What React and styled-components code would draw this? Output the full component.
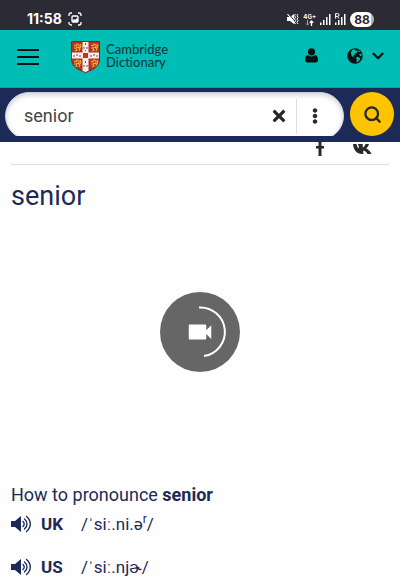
import React from 'react';
import styled, { createGlobalStyle } from 'styled-components';
import { FaTimes, FaEllipsisV } from 'react-icons/fa';
import { MdVideocam } from 'react-icons/md';
import { Search, ChevronDown } from 'lucide-react';

const navy = '#1d2a57';
const ink = '#292929';

const GlobalStyle = createGlobalStyle`
  * { box-sizing: border-box; }
  body { margin: 0; background: #fefefe; color: ${navy}; font-family: Roboto, "Liberation Sans", sans-serif; }
  h1, h2, p, ul { margin: 0; padding: 0; }
  svg { display: block; flex: none; }
`;

const IconButton = styled.button`
  display: flex;
  align-items: center;
  justify-content: ${(p) => (p.$spread ? 'space-between' : 'center')};
  flex: none;
  padding: 0;
  border: 0;
  background: none;
  color: ${(p) => p.$color || '#0b1110'};
  width: ${(p) => p.$width || 24}px;
  height: ${(p) => p.$height || 24}px;
`;

const StatusBar = styled.div`
  display: flex;
  align-items: center;
  height: 30px;
  padding: 8px 26px 0 27px;
  background: #2b2a35;
  color: #fff;
`;
const Clock = styled.span`
  font: 700 14px/20px Inter, sans-serif;
  margin-right: 6px;
`;
const StatusIcons = styled.div`
  display: flex;
  align-items: center;
  gap: 4px;
  margin-left: auto;
`;
const Network = styled.div`
  display: flex;
  flex-direction: column;
  align-items: center;
  font: 700 6px/7px Inter, sans-serif;
`;
const Battery = styled.span`
  width: 24px;
  border-radius: 8px;
  background: linear-gradient(90deg, #fff 88%, #b5b5ba 88%);
  color: #2b2a35;
  font: 700 12px/15px Inter, sans-serif;
  text-align: center;
`;

const Header = styled.header`
  display: flex;
  align-items: center;
  height: 58px;
  padding: 0 13px 4px 16px;
  background: #00bdb6;
  border-bottom: 1px solid #159d9d;
`;
const Brand = styled.a`
  display: flex;
  align-items: center;
  gap: 6px;
  margin-left: 31px;
  color: #103c3d;
  font: 500 13px/13px Lato, sans-serif;
  font-variant-ligatures: none;
  text-decoration: none;
`;
const BrandName = styled.span`
  display: flex;
  flex-direction: column;
  padding-bottom: 2px;
`;
const HeaderActions = styled.div`
  display: flex;
  align-items: center;
  margin-left: auto;
  padding-bottom: 2px;
  gap: 24px;
`;

const SearchBar = styled.form`
  display: flex;
  gap: 6px;
  height: 54px;
  padding: 4px 6px 6px 5px;
  background: ${navy};
`;
const FieldClip = styled.div`
  flex: 1;
  min-width: 0;
  overflow: hidden;
`;
const Field = styled.div`
  display: flex;
  align-items: center;
  height: 48px;
  padding: 0 16px 0 18px;
  border: 1px solid #c9cedc;
  border-radius: 24px;
  background: #fff;
  box-shadow: inset 0 2px 5px rgba(20, 25, 50, 0.2);
`;
const SearchInput = styled.input`
  flex: 1;
  min-width: 0;
  padding: 0;
  border: 0;
  outline: 0;
  background: none;
  color: #444;
  font: 400 18px/24px Roboto, sans-serif;
`;
const Divider = styled.span`
  width: 1px;
  height: 35px;
  margin: 0 6px 0 5px;
  background: #dedede;
`;
const SubmitButton = styled(IconButton)`
  border-radius: 50%;
  background: #ffc400;
`;

const Content = styled.main`
  padding: 0 11px;
`;
const ShareRow = styled.div`
  display: flex;
  align-items: flex-start;
  justify-content: flex-end;
  gap: 29px;
  height: 23px;
  padding-right: 17px;
  border-bottom: 1px solid #dedede;
`;
const ShareLink = styled.a`
  display: flex;
  color: ${ink};
`;
const Title = styled.h1`
  margin-top: 14px;
  font-size: 27px;
  line-height: 34px;
  font-weight: 400;
`;
const VideoArea = styled.div`
  display: flex;
  align-items: center;
  justify-content: center;
  height: 238px;
`;
const VideoButton = styled.button`
  display: grid;
  place-items: center;
  width: 80px;
  height: 80px;
  padding: 0;
  border: 0;
  border-radius: 50%;
  background: #666;
  color: #fff;
  > * { grid-area: 1 / 1; }
`;
const Subtitle = styled.h2`
  margin-top: 32px;
  font-size: 18px;
  line-height: 24px;
  font-weight: 400;
`;
const Pronunciations = styled.ul`
  display: flex;
  flex-direction: column;
  gap: 19px;
  margin-top: 5px;
  list-style: none;
`;
const Pronunciation = styled.li`
  display: flex;
  align-items: center;
  height: 24px;
  font-size: 17px;
  line-height: 24px;
`;
const Region = styled.strong`
  width: 40px;
  margin-left: 9px;
`;
const Sup = styled.sup`
  font-size: 12px;
  line-height: 0;
`;

const Screenshot = () => (
  <svg width="14" height="14" viewBox="0 0 14 14" fill="none" stroke="#fff" strokeWidth="1.3">
    <path d="M1 4V3a2 2 0 0 1 2-2h1M10 1h1a2 2 0 0 1 2 2v1M13 10v1a2 2 0 0 1-2 2h-1M4 13H3a2 2 0 0 1-2-2v-1" />
    <rect x="4" y="4" width="6" height="6" rx="1" />
    <path d="M4 9l2-2 1 1 2-2 1 1v3H4z" fill="#fff" stroke="none" />
  </svg>
);
const Muted = () => (
  <svg width="12" height="12" viewBox="0 0 12 12" fill="#fff">
    <path d="M0 4h3l4-3v10L3 8H0z" />
    <path d="M1.500.500l8 10" stroke="#2b2a35" />
    <path d="M.5 1l8 10" fill="none" stroke="#fff" strokeWidth="1.200" />
    <path d="M8.500 1l-1 1.700 1 1.600-1 1.700 1 1.700-1 1.600M11 1l-1 1.700 1 1.600-1 1.700 1 1.700-1 1.600 1 1.700" fill="none" stroke="#fff" />
  </svg>
);
const DataArrows = () => (
  <svg width="9" height="6" viewBox="0 0 9 6" fill="none" stroke="#fff">
    <path d="M2.5 0v5M1 3.500L2.500 5 4 3.500" stroke="#aaa" />
    <path d="M6.500 6V1M4.800 2.700L6.500 1l1.700 1.700" strokeWidth="1.300" />
  </svg>
);
const Signal = ({ roaming }) => (
  <svg width="11" height="12" viewBox="0 0 11 12" fill="#fff">
    {roaming ? (
      <path d="M.6 5.500V.6h2a1.400 1.400 0 0 1 0 2.800h-2M2.500 3.400l1.500 2.100" fill="none" stroke="#fff" />
    ) : null}
    <path d="M0 9.500h1.500V12H0zM3 7h1.500v5H3zM6 4h1.500v8H6zM9 1h1.500v11H9z" />
  </svg>
);
const Lion = ({ x, y }) => (
  <g transform={`translate(${x} ${y})`} fill="none" stroke="#e9b52f" strokeWidth="1.100">
    <path d="M1 2l2 1 1-2 2 1v2L3 5 1 5M3 5l1 2-2 1M5 4l2 2-1 2M7 1l1 2-1 2" />
  </g>
);
const Shield = () => (
  <svg width="29" height="32" viewBox="0 0 29 32">
    <defs>
      <clipPath id="shield"><path d="M.5.500h28V18c0 7-5.500 10.500-14 13.500C6 28.500.5 25 .5 18z" /></clipPath>
    </defs>
    <g clipPath="url(#shield)">
      <path d="M0 0h29v32H0z" fill="#b92f26" />
      <Lion x={2} y={2} /><Lion x={19} y={2} /><Lion x={2} y={18} /><Lion x={19} y={18} />
      <path d="M11.500 0h6v32h-6zM0 11.500h29v6H0z" fill="#f7eee8" />
      <path d="M12 12h5v5h-5z" fill="#c43228" />
      <path d="M14.500 2v2M13 6v2M16 6v2M14.500 9v1M14.500 20v2M13 24v2M16 24v2M3 14v2M6 13v2M9 14v2M20 14v2M23 13v2M26 14v2" stroke="#655" strokeWidth="1" />
    </g>
    <path d="M.5.500h28V18c0 7-5.500 10.500-14 13.500C6 28.500.5 25 .5 18z" fill="none" stroke="#5d342b" />
  </svg>
);
const Menu = () => (
  <svg width="22" height="16" viewBox="0 0 22 16" fill="currentColor">
    <path d="M0 0h22v2H0zM0 7h22v2H0zM0 14h22v2H0z" />
  </svg>
);
const User = () => (
  <svg width="13" height="15" viewBox="0 0 13 15" fill="currentColor">
    <circle cx="6.500" cy="3.800" r="3.600" />
    <path d="M3 7C1 7 0 9.500 0 12c0 1.500 1 2.500 2.500 2.500h8c1.500 0 2.500-1 2.500-2.500 0-2.500-1-5-3-5-1 1-2 1.400-3.500 1.400S4 8 3 7z" />
  </svg>
);
const Globe = () => (
  <svg width="16" height="16" viewBox="0 0 16 16">
    <circle cx="8" cy="8" r="7.700" fill="currentColor" />
    <path d="M5 2l2-.8 1.500.6L8 3l1.500-.5 1 .8L9.500 5 8 5.800 7.500 7.200 6 7.500 6.800 9 5.500 8.800 4.300 7 4 4.500zM11 2l2.200 1.800L11.500 4zM9 9.500l1.500-.7 2.700 1.400-.4 1.600-2.600 2.700-.8-.4.500-2zM12 6l2.300-.3.200 2-1.300.2z" fill="#00bdb6" />
  </svg>
);
const Speaker = () => (
  <svg width="21" height="18" viewBox="0 0 21 18" fill="none" stroke="currentColor" strokeWidth="1.400" strokeLinecap="round">
    <path d="M0 6h4l6-5v16l-6-5H0z" fill="currentColor" stroke="none" />
    <path d="M12 6.500c1.600 1.500 1.600 3.500 0 5M13.500 4c3.300 2.700 3.300 7.300 0 10M15.500 1.500c5 4 5 11 0 15" />
  </svg>
);
const Facebook = () => (
  <svg width="8" height="14" viewBox="0 0 8 14" fill="currentColor">
    <path d="M2.500 0h3v4H8v2.500H5.500V14h-3V6.500H0V4h2.500z" />
  </svg>
);
const Vk = () => (
  <svg width="19" height="13" viewBox="0 0 19 13" fill="currentColor">
    <path d="M0 2h3.500c.4 2 1.200 3.800 2.300 4.500V4L4.800 2h4.900v3.500c1.400-.5 2.300-2 2.900-3.500H16c-.4 1.800-1.500 3.300-2.800 4.200 2 .9 4 3 5.300 5.800h-4c-.8-1.500-2.200-3-4.200-3.400V12H9C4 12 .3 8 0 2z" />
  </svg>
);
const Progress = () => (
  <svg width="80" height="80" viewBox="0 0 80 80" fill="none" stroke="#fff" strokeWidth="2">
    <path d="M39 15.500A24.400 24.400 0 0 1 44 64" />
  </svg>
);

const entries = [
  { region: 'UK', ipa: <>/ˈsiː.ni.ə<Sup>r</Sup>/</> },
  { region: 'US', ipa: '/ˈsiː.njɚ/' },
];

export default function App() {
  return (
    <>
      <GlobalStyle />
      <StatusBar>
        <Clock>11:58</Clock>
        <Screenshot />
        <StatusIcons>
          <Muted />
          <Network>4G+<DataArrows /></Network>
          <Signal />
          <Signal roaming />
          <Battery>88</Battery>
        </StatusIcons>
      </StatusBar>
      <Header>
        <IconButton aria-label="Menu"><Menu /></IconButton>
        <Brand href="#home"><Shield /><BrandName><span>Cambridge</span><span>Dictionary</span></BrandName></Brand>
        <HeaderActions>
          <IconButton aria-label="Account"><User /></IconButton>
          <IconButton aria-label="Language" $width={40} $spread>
            <Globe />
            <ChevronDown size={18} strokeWidth={3} />
          </IconButton>
        </HeaderActions>
      </Header>
      <SearchBar onSubmit={(e) => e.preventDefault()}>
        <FieldClip>
          <Field>
            <SearchInput aria-label="Search" defaultValue="senior" />
            <IconButton type="button" aria-label="Clear" $color={ink}><FaTimes size={18} /></IconButton>
            <Divider />
            <IconButton type="button" aria-label="More options" $color={ink}><FaEllipsisV size={16} /></IconButton>
          </Field>
        </FieldClip>
        <SubmitButton aria-label="Search" $color={ink} $width={44} $height={44}>
          <Search size={19} strokeWidth={3} />
        </SubmitButton>
      </SearchBar>
      <Content>
        <ShareRow>
          <ShareLink href="#facebook" aria-label="Facebook"><Facebook /></ShareLink>
          <ShareLink href="#vk" aria-label="VK"><Vk /></ShareLink>
        </ShareRow>
        <Title>senior</Title>
        <VideoArea>
          <VideoButton aria-label="Play video"><Progress /><MdVideocam size={30} /></VideoButton>
        </VideoArea>
        <Subtitle>How to pronounce <strong>senior</strong></Subtitle>
        <Pronunciations>
          {entries.map(({ region, ipa }) => (
            <Pronunciation key={region}>
              <IconButton aria-label={`Listen in ${region}`} $color={navy} $width={21}><Speaker /></IconButton>
              <Region>{region}</Region>
              <span>{ipa}</span>
            </Pronunciation>
          ))}
        </Pronunciations>
      </Content>
    </>
  );
}
